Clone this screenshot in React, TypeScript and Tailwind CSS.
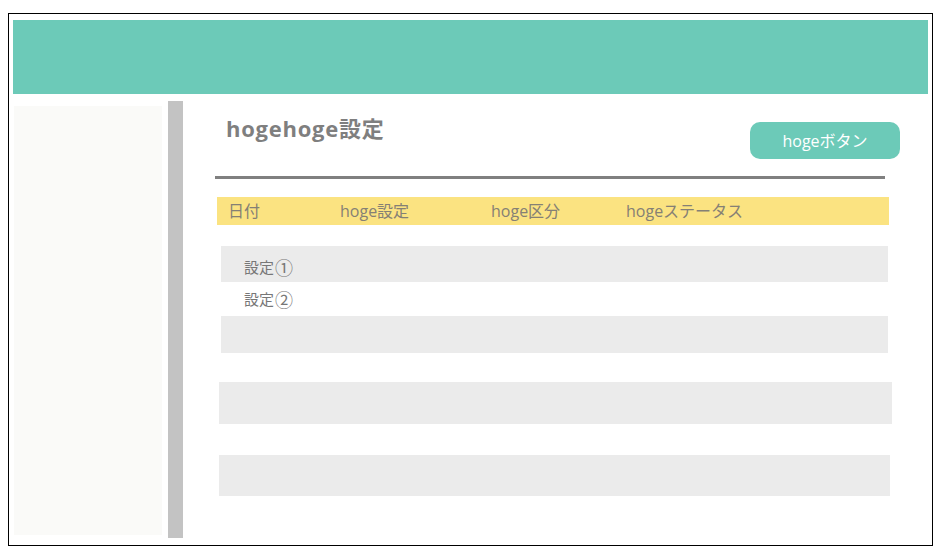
import React from "react";

const font = { fontFamily: '"Open Sans", "Noto Sans CJK JP", sans-serif' };
const cjk = { fontFamily: '"Noto Sans CJK JP", sans-serif' };

export default function App() {
  return (
    <div className="w-[945px] h-[554px] bg-white pl-[8px] pt-[13px]" style={font}>
      <div className="w-[925px] h-[533px] border border-black bg-white flex flex-col">
        <div className="ml-[4px] mt-[6px] w-[915px] h-[74px] bg-[#6ccab8]" />
        <div className="flex items-start">
          <div className="ml-[5px] mt-[12px] w-[148px] h-[429px] bg-[#fafaf8]" />
          <div className="ml-[6px] mt-[7px] w-[15px] h-[437px] bg-[#c3c3c3]" />
          <div className="flex flex-col">
            <div className="flex items-start h-[82px]">
              <div className="ml-[43px] mt-[20px] text-[22px] leading-[28px] font-bold text-[#7f7f7f] tracking-[0.75px]">
                hogehoge設定
              </div>
              <div className="ml-auto mt-[28px] mr-[-8px] w-[150px] h-[37px] rounded-[10px] bg-[#6ccab8] text-white text-[16px] flex items-center justify-center">
                hogeボタン
              </div>
            </div>
            <div className="ml-[32px] w-[670px] h-[3px] bg-[#808080]" />
            <div className="ml-[34px] mt-[18px] w-[672px] h-[28px] bg-[#fbe381] flex items-center text-[16px] text-[#858075]">
              <div className="pl-[11px] w-[123px]">日付</div>
              <div className="w-[151px]">hoge設定</div>
              <div className="w-[135px]">hoge区分</div>
              <div>hogeステータス</div>
            </div>
            <div
              className="ml-[38px] mt-[21px] w-[667px] h-[36px] bg-[#ebebeb] pl-[23px] pt-[6px] flex items-center text-[15px] leading-[20px] text-[#777777]"
              style={cjk}
            >
              <span>設定</span>
              <span className="ml-[1px] text-[18px] leading-[20px]">①</span>
            </div>
            <div
              className="ml-[38px] w-[667px] h-[34px] pl-[23px] flex items-center text-[15px] leading-[20px] text-[#777777]"
              style={cjk}
            >
              <span>設定</span>
              <span className="ml-[1px] text-[18px] leading-[20px]">②</span>
            </div>
            <div className="ml-[38px] w-[667px] h-[37px] bg-[#ebebeb]" />
            <div className="ml-[36px] mt-[29px] w-[673px] h-[42px] bg-[#ebebeb]" />
            <div className="ml-[36px] mt-[31px] w-[671px] h-[41px] bg-[#ebebeb]" />
          </div>
        </div>
      </div>
    </div>
  );
}
